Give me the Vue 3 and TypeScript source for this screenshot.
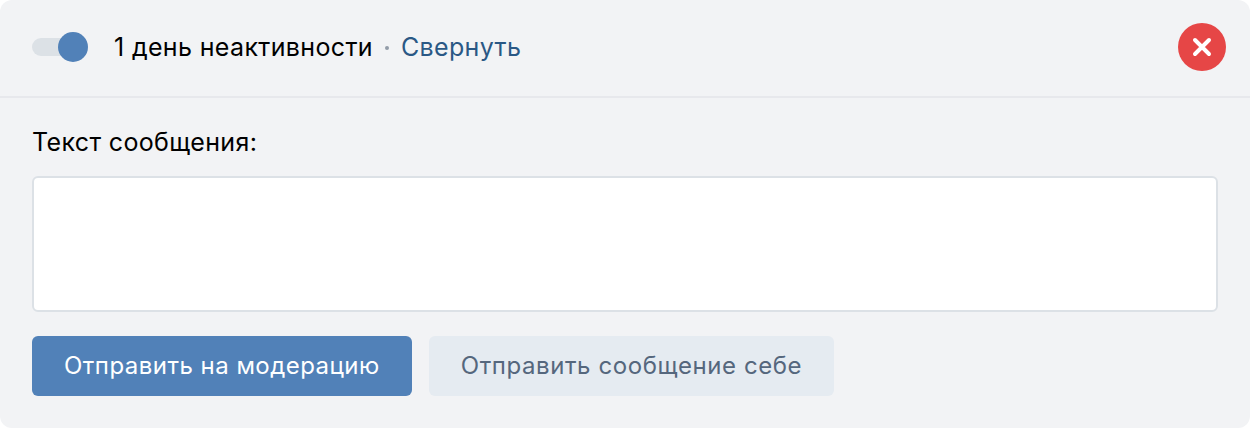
<script setup lang="ts">
const title: string = "1 день неактивности";
</script>

<template>
  <div class="panel">
    <header class="head">
      <div class="toggle"><span class="track"></span><span class="knob"></span></div>
      <span class="title">{{ title }}</span>
      <span class="dot"></span>
      <a class="link">Свернуть</a>
      <button class="close" aria-label="close">
        <svg width="24" height="24" viewBox="0 0 24 24">
          <path d="M5 5 L19 19 M19 5 L5 19" stroke="#fff" stroke-width="4" stroke-linecap="round" fill="none" />
        </svg>
      </button>
    </header>
    <section class="body">
      <div class="label">Текст сообщения:</div>
      <div class="area"></div>
      <div class="actions">
        <button class="btn primary">Отправить на модерацию</button>
        <button class="btn secondary">Отправить сообщение себе</button>
      </div>
    </section>
  </div>
</template>

<style>
html, body { margin: 0; background: #fff; }
</style>

<style scoped>
.panel {
  width: 1250px;
  height: 428px;
  box-sizing: border-box;
  background: #f2f3f5;
  border-radius: 12px;
  font-family: Inter, "Noto Sans", sans-serif;
  font-size: 25px;
  letter-spacing: 0.35px;
  line-height: 32px;
  overflow: hidden;
}
.head {
  height: 98px;
  box-sizing: border-box;
  border-bottom: 2px solid #e7e8ec;
  display: flex;
  align-items: center;
  padding: 0 24px 2px 32px;
}
.toggle {
  position: relative;
  width: 56px;
  height: 30px;
  flex: none;
  margin-right: 26px;
}
.track {
  position: absolute;
  left: 0;
  top: 6px;
  width: 50px;
  height: 18px;
  border-radius: 9px;
  background: #dce1e6;
}
.knob {
  position: absolute;
  right: 0;
  top: 0;
  width: 30px;
  height: 30px;
  border-radius: 50%;
  background: #5181b8;
}
.title { color: #000; }
.dot {
  width: 4px;
  height: 4px;
  border-radius: 50%;
  background: #939ca8;
  margin: 2px 12px 0 12px;
}
.link { color: #2a5885; }
.close {
  margin-left: auto;
  width: 48px;
  height: 48px;
  border: 0;
  padding: 0;
  border-radius: 50%;
  background: #e64646;
  display: flex;
  align-items: center;
  justify-content: center;
}
.body { padding: 28px 32px 0; }
.label { color: #000; height: 32px; }
.area {
  margin-top: 18px;
  height: 136px;
  box-sizing: border-box;
  background: #fff;
  border: 2px solid #dce1e6;
  border-radius: 6px;
}
.actions {
  margin-top: 24px;
  display: flex;
  gap: 17px;
}
.btn {
  height: 60px;
  border: 0;
  border-radius: 6px;
  font: inherit;
  font-size: 24px;
  padding: 0 32px;
}
.primary { background: #5181b8; color: #fff; letter-spacing: 0.47px; }
.secondary { background: #e5ebf1; color: #55677d; letter-spacing: 0.58px; }
</style>
